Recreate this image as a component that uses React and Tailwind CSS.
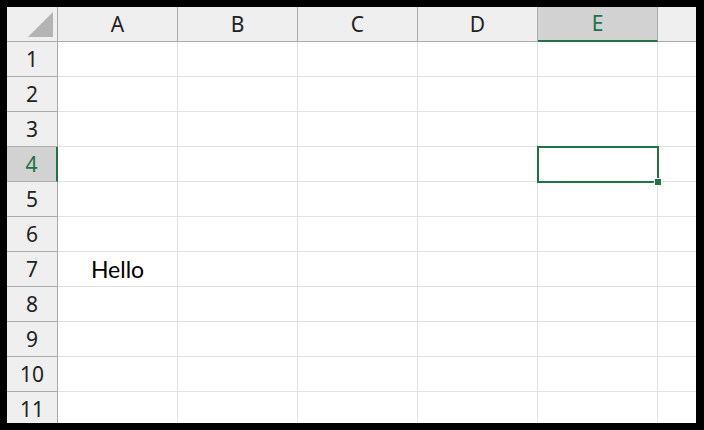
const COLS = ['A', 'B', 'C', 'D', 'E'];
const ROWS = [1, 2, 3, 4, 5, 6, 7, 8, 9, 10, 11];

export default function App() {
  const selCol = 'E';
  const selRow = 4;

  return (
    <div className="w-[704px] h-[430px] bg-black pt-[7px] pl-[7px]">
      <div
        className="w-[689px] h-[416px] bg-white overflow-hidden grid grid-cols-[51px_120px_120px_120px_120px_120px_38px] grid-rows-[35px_repeat(11,35px)]"
        style={{ fontFamily: '"Noto Sans", "Open Sans", sans-serif' }}
      >
        {/* corner */}
        <div className="relative bg-[#efefef] border-r border-b border-[#ababab]">
          <svg className="absolute right-[4px] bottom-[4px]" width="25" height="25" viewBox="0 0 25 25">
            <polygon points="25,0 25,25 0,25" fill="#b4b4b4" />
          </svg>
        </div>

        {/* column headers */}
        {COLS.map((c) => (
          <div
            key={c}
            className={`flex items-center justify-center text-[21px] leading-none ${
              c === selCol
                ? 'bg-[#d2d2d2] text-[#217346] border-b-2 border-b-[#217346] border-r border-r-[#ababab]'
                : 'bg-[#efefef] text-[#222] border-r border-b border-[#ababab]'
            }`}
          >
            {c}
          </div>
        ))}
        <div className="bg-[#efefef] border-b border-[#ababab]" />

        {/* rows */}
        {ROWS.map((r) => (
          <Row key={r} r={r} selected={r === selRow} selCol={selCol} />
        ))}
      </div>
    </div>
  );
}

function Row({ r, selected, selCol }) {
  return (
    <>
      <div
        className={`flex items-center justify-center text-[21px] leading-none ${
          selected
            ? 'bg-[#d2d2d2] text-[#217346] border-r-2 border-r-[#217346] border-b border-b-[#ababab]'
            : 'bg-[#efefef] text-[#222] border-r border-b border-[#ababab]'
        }`}
      >
        {r}
      </div>
      {COLS.map((c) => {
        const active = selected && c === selCol;
        return (
          <div key={c} className="relative border-r border-b border-[#e1e1e1] flex items-center justify-center">
            {r === 7 && c === 'A' && (
              <span className="text-[23px] text-black" style={{ fontFamily: 'Lato, "Open Sans", sans-serif' }}>
                Hello
              </span>
            )}
            {active && (
              <>
                <div className="absolute -left-[1px] -top-[1px] -right-[2px] -bottom-[2px] border-2 border-[#217346] z-10" />
                <div className="absolute -right-[5px] -bottom-[5px] w-[8px] h-[8px] bg-[#217346] border border-white z-20" />
              </>
            )}
          </div>
        );
      })}
      <div className="border-b border-[#e1e1e1]" />
    </>
  );
}
